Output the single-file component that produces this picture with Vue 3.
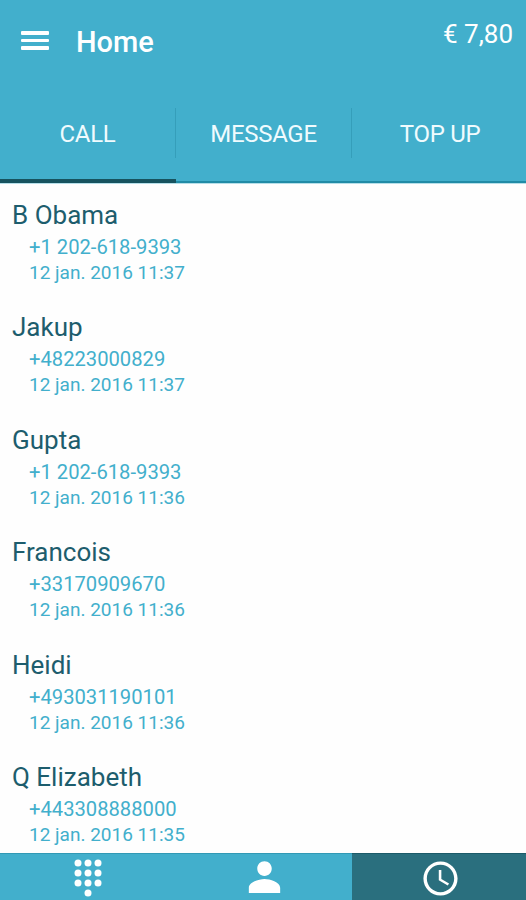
<template>
  <div class="screen">
    <header class="app-bar">
      <button class="menu-button" aria-label="Menu">
        <span></span>
        <span></span>
        <span></span>
      </button>
      <h1 class="title">Home</h1>
      <span class="balance">€ 7,80</span>
    </header>

    <nav class="tabs">
      <button
        v-for="tab in tabs"
        :key="tab"
        class="tab"
        :class="{ active: tab === activeTab }"
        @click="activeTab = tab"
      >
        <span class="tab-label">{{ tab }}</span>
      </button>
    </nav>

    <ul class="calls">
      <li v-for="call in calls" :key="call.name" class="call">
        <div class="name">{{ call.name }}</div>
        <div class="detail phone">{{ call.phone }}</div>
        <div class="detail date">{{ call.date }}</div>
      </li>
    </ul>

    <footer class="bottom-bar">
      <button class="bottom-item">
        <svg class="icon-dialpad" viewBox="0 0 24 24">
          <circle v-for="dot in dots" :key="dot.join()" :cx="dot[0]" :cy="dot[1]" r="2.1" />
        </svg>
      </button>
      <button class="bottom-item">
        <svg class="icon-person" viewBox="0 0 24 24">
          <path d="M12 11.7c2.1 0 3.7-1.700 3.700-3.800S14.100 4.200 12 4.200 8.300 5.800 8.300 7.900s1.600 3.800 3.700 3.800zm0 1.600c-2.700 0-8 1.600-8 4.400v2.700h16v-2.700c0-2.800-5.300-4.400-8-4.400z" />
        </svg>
      </button>
      <button class="bottom-item selected">
        <svg class="icon-clock" viewBox="0 0 24 24">
          <path d="M12 2C6.500 2 2 6.500 2 12s4.500 10 10 10 10-4.500 10-10S17.500 2 12 2zm0 18c-4.400 0-8-3.600-8-8s3.600-8 8-8 8 3.600 8 8-3.600 8-8 8zm.5-13H11v6l5.250 3.150.75-1.230-4.500-2.670z" />
        </svg>
      </button>
    </footer>
  </div>
</template>

<script setup>
import { ref } from 'vue'

const tabs = ['CALL', 'MESSAGE', 'TOP UP']
const activeTab = ref('CALL')

const calls = [
  { name: 'B Obama', phone: '+1 202-618-9393', date: '12 jan. 2016 11:37' },
  { name: 'Jakup', phone: '+48223000829', date: '12 jan. 2016 11:37' },
  { name: 'Gupta', phone: '+1 202-618-9393', date: '12 jan. 2016 11:36' },
  { name: 'Francois', phone: '+33170909670', date: '12 jan. 2016 11:36' },
  { name: 'Heidi', phone: '+493031190101', date: '12 jan. 2016 11:36' },
  { name: 'Q Elizabeth', phone: '+443308888000', date: '12 jan. 2016 11:35' }
]

const dots = [
  [6, 3], [12, 3], [18, 3],
  [6, 9], [12, 9], [18, 9],
  [6, 15], [12, 15], [18, 15],
  [12, 21]
]
</script>

<style>
body {
  margin: 0;
  background: #fff;
}
</style>

<style scoped>
.screen {
  display: flex;
  flex-direction: column;
  height: 900px;
  overflow: hidden;
  font-family: Roboto, "Liberation Sans", sans-serif;
  background: #fefefe;
}

button {
  margin: 0;
  padding: 0;
  border: 0;
  background: none;
  color: inherit;
  font: inherit;
}

.app-bar {
  display: flex;
  align-items: flex-start;
  flex: none;
  height: 84px;
  padding: 0 13px 0 21px;
  box-sizing: border-box;
  background: #42afcc;
  color: #fff;
}

.menu-button {
  display: flex;
  flex-direction: column;
  gap: 4px;
  width: 28px;
  margin-top: 31px;
}

.menu-button span {
  height: 3.6px;
  border-radius: 1px;
  background: #fff;
}

.title {
  margin: 26px 0 0 27px;
  font-size: 29px;
  line-height: 33px;
  font-weight: 500;
}

.balance {
  margin: 18px 0 0 auto;
  font-size: 26px;
  line-height: 32px;
}

.tabs {
  display: grid;
  grid-template-columns: 176px 176px 1fr;
  flex: none;
  height: 100px;
  box-sizing: border-box;
  background: #42afcc;
  border-bottom: 1px solid #b6dfe9;
  box-shadow: inset 0 -2px #218ba6;
  color: #f0fbfe;
}

.tab {
  display: flex;
  align-items: flex-start;
  padding-top: 24px;
}

.tab.active {
  box-shadow: inset 0 -4px #17535f;
}

.tab-label {
  flex: 1;
  height: 50px;
  box-sizing: border-box;
  border-right: 1px solid #359eba;
  font-size: 24px;
  line-height: 52px;
  letter-spacing: -0.3px;
  text-align: center;
}

.tab:last-child .tab-label {
  padding-left: 2px;
  border-right: 0;
}

.calls {
  flex: 1;
  min-height: 0;
  margin: 0;
  padding: 15px 0 0 12px;
  overflow: hidden;
  list-style: none;
}

.call {
  height: 112.4px;
}

.name {
  font-size: 26px;
  line-height: 32px;
  color: #1d5d6d;
}

.detail {
  padding-left: 17px;
  line-height: 26px;
  color: #42afcc;
}

.phone {
  padding-top: 3px;
  font-size: 20.2px;
}

.date {
  font-size: 19px;
}

.bottom-bar {
  display: grid;
  grid-template-columns: 176px 176px 1fr;
  flex: none;
  height: 47px;
  background: #42afcc;
  box-shadow: inset 0 1px #3199b5;
}

.bottom-item {
  display: flex;
  align-items: center;
  justify-content: center;
}

.bottom-item.selected {
  background: #2a6f7e;
  box-shadow: inset 0 1px #1c5b69;
}

svg {
  display: block;
  fill: #fff;
}

.icon-dialpad {
  width: 40px;
  height: 40px;
  margin-top: 3px;
}

.icon-person {
  width: 47px;
  height: 47px;
}

.icon-clock {
  width: 41px;
  height: 41px;
  margin: 3px 0 0 2px;
}
</style>
